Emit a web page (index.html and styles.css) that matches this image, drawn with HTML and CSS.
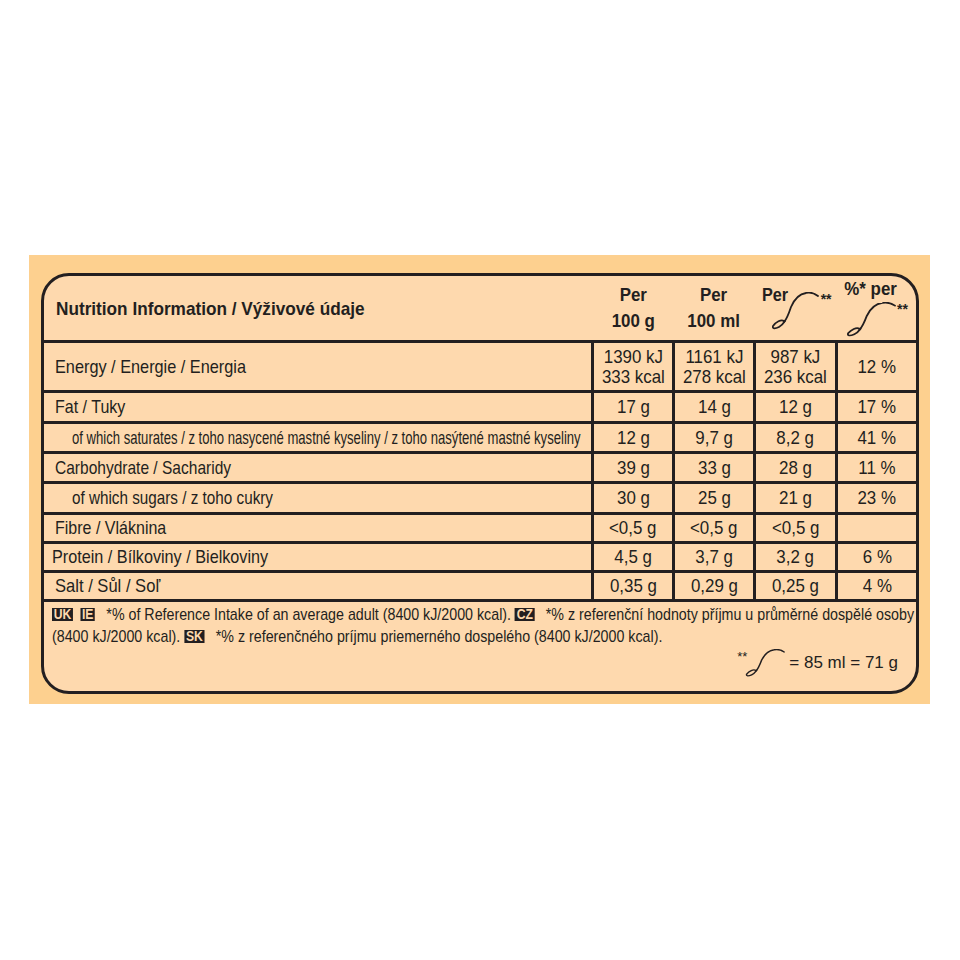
FILE: index.html
```html
<!DOCTYPE html>
<html lang="cs">
<head>
<meta charset="utf-8">
<title>Nutrition Information</title>
<link rel="stylesheet" href="styles.css">
</head>
<body>
<div class="outer">
  <div class="panel">
    <div class="head">
      <div class="title"><span class="t">Nutrition Information / Výživové údaje</span></div>
      <div class="hcol"><span class="t">Per<br>100 g</span></div>
      <div class="hcol"><span class="t">Per<br>100 ml</span></div>
      <div class="hcol hc3">
        <span class="per t">Per</span>
        <svg class="spoon sp3" viewBox="0 0 48 38" width="48" height="38" aria-hidden="true"><path d="M47 4 C43 1 39 0 35 1 C28 2 23 8 20 15 C18 21 16 27 13 30"/><path d="M13 29 C10 27 5 30 2 34 C1 37 4 37 8 35 C10 34 12 32 14 29"/></svg>
        <span class="stars">**</span>
      </div>
      <div class="hcol hc4">
        <span class="pctper t">%* per</span>
        <span class="sprow">
          <svg class="spoon sp4" viewBox="0 0 48 38" width="50" height="35" preserveAspectRatio="none" aria-hidden="true"><path d="M47 4 C43 1 39 0 35 1 C28 2 23 8 20 15 C18 21 16 27 13 30"/><path d="M13 29 C10 27 5 30 2 34 C1 37 4 37 8 35 C10 34 12 32 14 29"/></svg>
          <span class="stars">**</span>
        </span>
      </div>
    </div>
    <div class="grid">
      <div class="c lab"><span class="t k-en">Energy / Energie / Energia</span></div>
      <div class="c v two"><span class="t">1390 kJ<br>333 kcal</span></div>
      <div class="c v two"><span class="t">1161 kJ<br>278 kcal</span></div>
      <div class="c v two"><span class="t">987 kJ<br>236 kcal</span></div>
      <div class="c v"><span class="t">12 %</span></div>

      <div class="c lab"><span class="t k-fat">Fat / Tuky</span></div>
      <div class="c v"><span class="t">17 g</span></div>
      <div class="c v"><span class="t">14 g</span></div>
      <div class="c v"><span class="t">12 g</span></div>
      <div class="c v"><span class="t">17 %</span></div>

      <div class="c lab sub"><span class="t k-sat">of which saturates / z toho nasycené mastné kyseliny / z toho nasýtené mastné kyseliny</span></div>
      <div class="c v"><span class="t">12 g</span></div>
      <div class="c v"><span class="t">9,7 g</span></div>
      <div class="c v"><span class="t">8,2 g</span></div>
      <div class="c v"><span class="t">41 %</span></div>

      <div class="c lab"><span class="t k-carb">Carbohydrate / Sacharidy</span></div>
      <div class="c v"><span class="t">39 g</span></div>
      <div class="c v"><span class="t">33 g</span></div>
      <div class="c v"><span class="t">28 g</span></div>
      <div class="c v"><span class="t">11 %</span></div>

      <div class="c lab sub"><span class="t k-sug">of which sugars / z toho cukry</span></div>
      <div class="c v"><span class="t">30 g</span></div>
      <div class="c v"><span class="t">25 g</span></div>
      <div class="c v"><span class="t">21 g</span></div>
      <div class="c v"><span class="t">23 %</span></div>

      <div class="c lab"><span class="t k-fat">Fibre / Vláknina</span></div>
      <div class="c v"><span class="t">&lt;0,5 g</span></div>
      <div class="c v"><span class="t">&lt;0,5 g</span></div>
      <div class="c v"><span class="t">&lt;0,5 g</span></div>
      <div class="c v"></div>

      <div class="c lab prot"><span class="t k-prot">Protein / Bílkoviny / Bielkoviny</span></div>
      <div class="c v"><span class="t">4,5 g</span></div>
      <div class="c v"><span class="t">3,7 g</span></div>
      <div class="c v"><span class="t">3,2 g</span></div>
      <div class="c v"><span class="t">6 %</span></div>

      <div class="c lab"><span class="t k-salt">Salt / Sůl / Soľ</span></div>
      <div class="c v"><span class="t">0,35 g</span></div>
      <div class="c v"><span class="t">0,29 g</span></div>
      <div class="c v"><span class="t">0,25 g</span></div>
      <div class="c v"><span class="t">4 %</span></div>
    </div>
    <div class="foot">
      <div class="fline"><span class="badge">UK</span> <span class="badge">IE</span>  *% of Reference Intake of an average adult (8400 kJ/2000 kcal). <span class="badge">CZ</span>  *% z referenční hodnoty příjmu u průměrné dospělé osoby</div>
      <div class="fline">(8400 kJ/2000 kcal). <span class="badge">SK</span>  *% z referenčného príjmu priemerného dospelého (8400 kJ/2000 kcal).</div>
      <div class="portion">
        <span class="pstars">**</span>
        <svg class="spoon spf" viewBox="0 0 48 38" width="40" height="28" preserveAspectRatio="none" aria-hidden="true"><path d="M47 4 C43 1 39 0 35 1 C28 2 23 8 20 15 C18 21 16 27 13 30"/><path d="M13 29 C10 27 5 30 2 34 C1 37 4 37 8 35 C10 34 12 32 14 29"/></svg>
        <span class="pval">= 85 ml = 71 g</span>
      </div>
    </div>
  </div>
</div>
</body>
</html>
```
FILE: styles.css
```css
html, body {
  margin: 0;
  padding: 0;
  background: #ffffff;
}
body {
  font-family: "Liberation Sans", Arial, sans-serif;
  color: #231f20;
}
.outer {
  margin: 255px 0 0 29px;
  width: 901px;
  height: 449px;
  box-sizing: border-box;
  padding: 18px 11px 10px 12px;
  background: #fdd08f;
}
.panel {
  box-sizing: border-box;
  height: 421px;
  border: 3px solid #231f20;
  border-radius: 28px;
  background: #fed9ae;
  overflow: hidden;
}
.t {
  display: inline-block;
  white-space: nowrap;
  transform: scaleX(var(--k, 0.89));
  transform-origin: center;
}

/* header */
.head {
  display: grid;
  grid-template-columns: 547px 78px 78px 79px 78px;
  column-gap: 3px;
  height: 64px;
}
.title {
  font-weight: bold;
  font-size: 19px;
  align-self: center;
  padding-left: 12px;
  padding-top: 2px;
}
.title .t {
  --k: 0.905;
  transform-origin: left;
}
.hcol {
  font-weight: bold;
  font-size: 19px;
  line-height: 26px;
  text-align: center;
  padding-top: 6px;
}
.hcol .t {
  --k: 0.89;
}
.hc3 {
  display: flex;
  align-items: flex-start;
  text-align: left;
  padding-left: 6px;
}
.hc3 .per {
  line-height: 26px;
  transform-origin: left;
  --k: 0.853;
}
.spoon {
  fill: none;
  stroke: #231f20;
  stroke-width: 1.8;
  stroke-linecap: round;
  stroke-linejoin: round;
  flex: none;
}
.sp3 {
  margin-left: -22px;
  margin-top: 10px;
}
.stars {
  font-size: 14px;
  line-height: 14px;
  margin-top: 10px;
  margin-left: 2px;
}
.hc4 {
  display: flex;
  flex-direction: column;
  align-items: center;
  padding-top: 2px;
}
.pctper {
  line-height: 22px;
  margin-right: 12px;
}
.sprow {
  display: flex;
  align-items: flex-start;
  margin-top: 2px;
}
.sprow .stars {
  margin-top: 0;
  margin-left: 1px;
}

/* table */
.grid {
  display: grid;
  grid-template-columns: 547px 78px 78px 79px 78px;
  grid-template-rows: 47px 28px 27px 27px 28px 26px 26px 26px;
  gap: 3px;
  background: #231f20;
  padding: 3px 0;
}
.c {
  background: #fed9ae;
  display: flex;
  align-items: center;
  font-size: 19px;
  line-height: 20px;
}
.lab {
  padding-left: 11px;
}
.lab .t {
  transform-origin: left;
}
.lab.sub {
  padding-left: 28px;
}
.lab.prot {
  padding-left: 8px;
}
.v {
  justify-content: center;
  text-align: center;
}
.k-en { --k: 0.857; }
.k-fat { --k: 0.843; }
.k-sat { --k: 0.689; }
.k-carb { --k: 0.817; }
.k-sug { --k: 0.803; }
.k-prot { --k: 0.853; }
.k-salt { --k: 0.872; }

/* footer */
.foot {
  padding: 2px 0 0 8px;
  font-size: 17px;
  line-height: 22px;
}
.fline {
  white-space: pre;
  transform: scaleX(0.838);
  transform-origin: left;
}
.badge {
  display: inline-block;
  background: #231f20;
  color: #fed9ae;
  font-weight: bold;
  font-size: 14.5px;
  line-height: 13px;
  padding: 0 2px;
  margin-right: 4px;
  vertical-align: 1px;
}
.portion {
  display: flex;
  justify-content: flex-end;
  align-items: center;
  margin-top: 1px;
  padding-right: 18px;
}
.pstars {
  font-size: 13px;
  line-height: 13px;
  align-self: flex-start;
  margin-top: 1px;
}
.spf {
  margin-left: -2px;
  margin-right: 4px;
}
.pval {
  font-size: 17px;
  line-height: 22px;
}
```
